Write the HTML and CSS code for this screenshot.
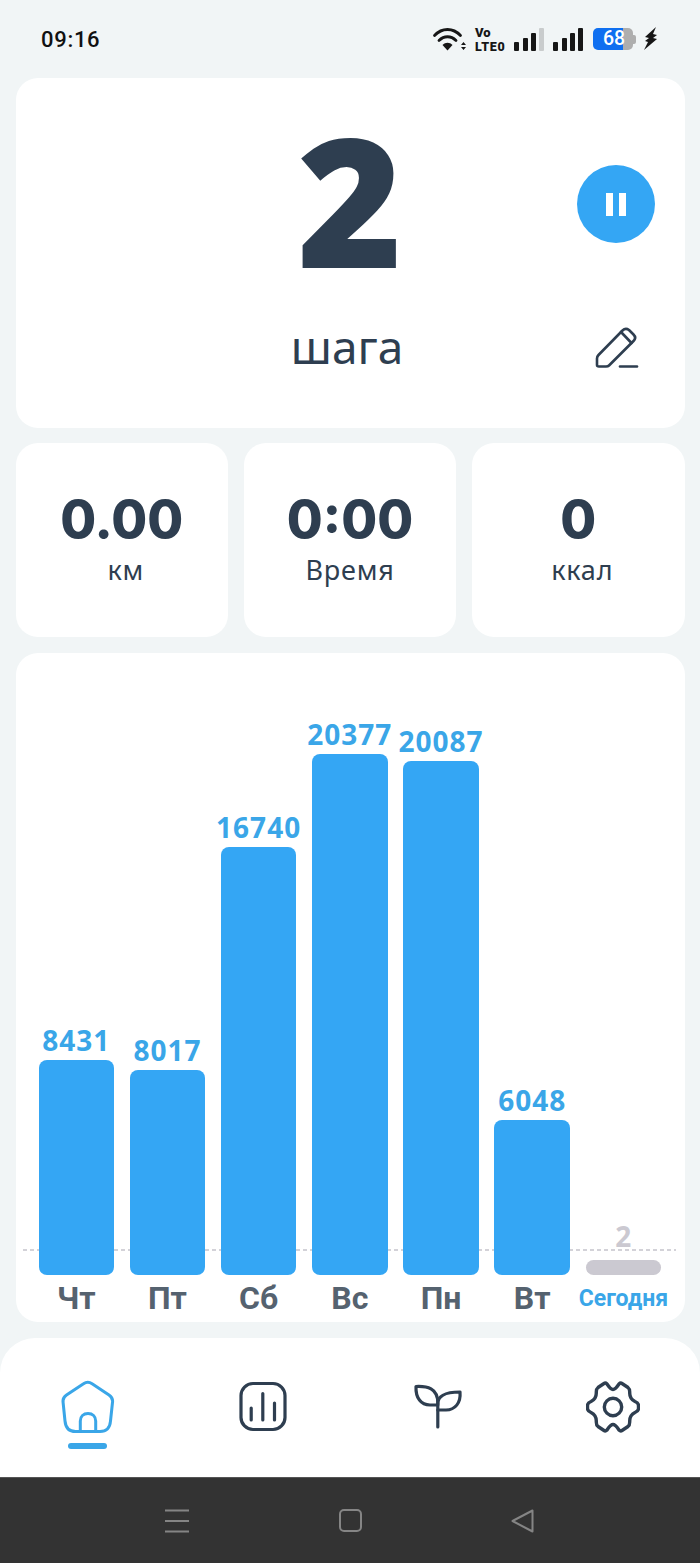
FILE: index.html
```html
<!DOCTYPE html>
<html lang="ru">
<head>
<meta charset="utf-8">
<title>Шаги</title>
<link rel="stylesheet" href="styles.css">
</head>
<body>
<div class="screen">
  <header class="status">
    <span class="clock">09:16</span>
    <div class="status-icons">
      <svg class="wifi" width="36" height="26" viewBox="0 0 36 26"><g fill="none" stroke="#161616" stroke-width="2.8" stroke-linecap="round"><path d="M2.500 9.500C10 1.500 21 1.500 28.500 9.500"/><path d="M7 14.500C12 9.500 19 9.500 24 14.500"/></g><path d="M10.500 19C13.500 16 17.500 16 20.500 19L15.500 24.500Z" fill="#161616"/><path d="M29 19h5l-2.500-3zM29 21h5l-2.500 3z" fill="#161616"/></svg>
      <div class="volte"><span class="vo">Vo</span><span class="lte">LTE0</span></div>
      <svg class="sig" width="30" height="24" viewBox="0 0 30 24"><rect x="0" y="15" width="5" height="9" rx="1" fill="#161616"/><rect x="9" y="11" width="5" height="13" rx="1" fill="#161616"/><rect x="17" y="6" width="5" height="18" rx="1" fill="#161616"/><rect x="25" y="1" width="5" height="23" rx="1" fill="#c9cccd"/></svg>
      <svg class="sig sig2" width="30" height="24" viewBox="0 0 30 24"><rect x="0" y="15" width="5" height="9" rx="1" fill="#161616"/><rect x="9" y="11" width="5" height="13" rx="1" fill="#161616"/><rect x="17" y="6" width="5" height="18" rx="1" fill="#161616"/><rect x="25" y="1" width="5" height="23" rx="1" fill="#161616"/></svg>
      <div class="battery"><div class="battery-fill"></div><div class="battery-rest"></div><span class="battery-cap"></span><span class="battery-num">68</span></div>
      <svg class="bolt" width="16" height="24" viewBox="0 0 16 24"><path d="M13 0L2 10l4 1-4 3 3 1-4 8 13-11-4-1 4-3-4-1z" fill="#161616"/></svg>
    </div>
  </header>

  <section class="card hero">
    <div class="hero-number">2</div>
    <div class="hero-label">шага</div>
    <button class="pause"><span></span><span></span></button>
    <svg class="edit" width="46" height="46" viewBox="0 0 46 46" fill="none" stroke="#2e3e50" stroke-width="2.6" stroke-linecap="round" stroke-linejoin="round">
      <path d="M3 42V35.500C3 34 3.500 33 4.500 32L28.500 7.500C30.500 5.500 33 5.500 35 7L39.500 11.500C41.500 13.500 41.500 16 39.500 18L15 42.500C14 43.500 13 43.500 12 43.500H5C3.800 43.500 3 43 3 42Z"/>
      <path d="M27 9L37.500 20"/>
      <path d="M26 43.500H43"/>
    </svg>
  </section>

  <section class="stats">
    <div class="card stat"><div class="stat-value">0.00</div><div class="stat-label nudged">км</div></div>
    <div class="card stat"><div class="stat-value">0:00</div><div class="stat-label">Время</div></div>
    <div class="card stat"><div class="stat-value">0</div><div class="stat-label nudged">ккал</div></div>
  </section>

  <section class="card chart">
    <div class="baseline"></div>
    <div class="bars">
      <div class="col"><span class="val">8431</span><div class="bar" style="height:215px"></div><span class="day">Чт</span></div>
      <div class="col"><span class="val">8017</span><div class="bar" style="height:205px"></div><span class="day">Пт</span></div>
      <div class="col"><span class="val">16740</span><div class="bar" style="height:428px"></div><span class="day">Сб</span></div>
      <div class="col"><span class="val">20377</span><div class="bar" style="height:521px"></div><span class="day">Вс</span></div>
      <div class="col"><span class="val">20087</span><div class="bar" style="height:514px"></div><span class="day">Пн</span></div>
      <div class="col"><span class="val">6048</span><div class="bar" style="height:155px"></div><span class="day">Вт</span></div>
      <div class="col today"><span class="val">2</span><div class="bar" style="height:15px"></div><span class="day">Сегодня</span></div>
    </div>
  </section>

  <nav class="tabs">
    <div class="tab active">
      <svg width="54" height="54" viewBox="0 0 54 54" fill="none" stroke="#3aa6e8" stroke-width="3" stroke-linecap="round" stroke-linejoin="round">
        <path d="M22.500 3.800C25 1.900 28.600 1.900 31.100 3.800L48 15C50.500 16.700 51.800 18.500 51.600 21.500L49.500 41C49 47.500 45.500 51.500 39 51.500H14.500C8 51.500 4.600 47.500 4 41L2 21.500C1.800 18.500 3 16.700 5.500 15Z"/>
        <path d="M19.300 51V41C19.300 36.500 22.500 33.500 27 33.500C31.500 33.500 34.700 36.500 34.700 41V51"/>
      </svg>
      <span class="tab-bar"></span>
    </div>
    <div class="tab">
      <svg width="54" height="54" viewBox="0 0 54 54" fill="none" stroke="#2e3e50" stroke-width="3.200" stroke-linecap="round">
        <rect x="5" y="3.500" width="44" height="46" rx="12"/>
        <path d="M15.200 28V40M26.800 13.500V40M38.500 23V40"/>
      </svg>
    </div>
    <div class="tab">
      <svg width="54" height="54" viewBox="0 0 54 54" fill="none" stroke="#2e3e50" stroke-width="3.200" stroke-linecap="round" stroke-linejoin="round">
        <path d="M5 6.500C16 6 26.800 8 26.800 23V25H19C10 25 4.500 18 5 6.500Z"/>
        <path d="M26.800 24C26.800 16 33 12 49 12C50 23 44 30 35 30H26.800"/>
        <path d="M26.800 25V47"/>
      </svg>
    </div>
    <div class="tab">
      <svg width="54" height="54" viewBox="0 0 54 54" fill="none" stroke="#2e3e50" stroke-width="3.400" stroke-linecap="round" stroke-linejoin="round">
        <path d="M27 9.500C29.500 9.500 31 7 33 4C34 3 35 2.800 36 3.500L42 7.500C44 9 43.700 11 43.700 13C43.700 17.500 46 20 49 21.500C51.500 22.500 52.500 24 52.500 25.500V28.500C52.500 30 51.500 31.500 49 32.500C46 34 43.700 36.500 43.700 41C43.700 43 44 45 42 46.500L36 50.500C35 51.200 34 51 33 50C31 47 29.500 44.500 27 44.500C24.500 44.500 23 47 21 50C20 51 19 51.200 18 50.500L12 46.500C10 45 10.300 43 10.300 41C10.300 36.500 8 34 5 32.500C2.500 31.500 1.500 30 1.500 28.500V25.500C1.500 24 2.500 22.500 5 21.500C8 20 10.300 17.500 10.300 13C10.300 11 10 9 12 7.500L18 3.500C19 2.800 20 3 21 4C23 7 24.500 9.500 27 9.500Z"/>
        <circle cx="27" cy="27" r="8.700"/>
      </svg>
    </div>
  </nav>

  <footer class="sysbar">
    <svg width="24" height="24" viewBox="0 0 24 24" fill="none" stroke="#858585" stroke-width="2"><path d="M0 1.500H24M0 12H24M0 22.500H24"/></svg>
    <svg width="23" height="23" viewBox="0 0 23 23" fill="none" stroke="#858585" stroke-width="2"><rect x="1" y="1" width="21" height="21" rx="4"/></svg>
    <svg width="23" height="24" viewBox="0 0 23 24" fill="none" stroke="#858585" stroke-width="2" stroke-linejoin="round"><path d="M21.500 1.500V22.500L1.500 12Z"/></svg>
  </footer>
</div>
</body>
</html>
```

FILE: styles.css
```css
* { box-sizing: border-box; }
html, body { margin: 0; padding: 0; }
body { background: #f1f5f6; font-family: "Roboto", "Liberation Sans", sans-serif; }
.screen { width: 700px; height: 1563px; display: flex; flex-direction: column; overflow: hidden; }

.status { height: 78px; flex: none; display: flex; justify-content: space-between; align-items: center; padding: 0 41px; }
.clock { font-family: "Roboto", sans-serif; font-size: 22px; font-weight: 500; color: #111; letter-spacing: 0.7px; }
.status-icons { display: flex; align-items: center; }
.wifi { display: block; margin-right: 7px; }
.volte { display: flex; flex-direction: column; width: 30px; font-family: "Roboto", sans-serif; font-weight: 900; color: #161616; margin-right: 9px; }
.vo { font-size: 13px; line-height: 15px; }
.lte { font-size: 12.5px; line-height: 14px; letter-spacing: 0.7px; }
.sig { display: block; margin-right: 9px; }
.sig2 { margin-right: 10px; }
.battery { position: relative; width: 43px; height: 22px; display: flex; margin-right: 7px; }
.battery-fill { width: 30px; background: #0f6ff0; border-radius: 5px 0 0 5px; }
.battery-rest { width: 10px; background: #aeaeae; border-radius: 0 5px 5px 0; }
.battery-cap { width: 3px; height: 9px; align-self: center; background: #aeaeae; border-radius: 0 2px 2px 0; }
.battery-num { position: absolute; left: 10px; top: 0; font-family: "Roboto", sans-serif; font-size: 19.5px; line-height: 22px; font-weight: 500; color: #fff; }
.bolt { display: block; }

.card { background: #fff; border-radius: 22px; }
.hero { position: relative; height: 350px; margin: 0 15.5px; flex: none; display: flex; flex-direction: column; align-items: center; }
.hero-number { font-family: "Open Sans", sans-serif; font-weight: 800; font-size: 180px; line-height: 226px; color: #2e3e50; margin-top: 8px; }
.hero-label { font-family: "Noto Sans", sans-serif; font-size: 46px; line-height: 60px; color: #2e3e50; margin: 4px 6px 0 0; }
.pause { position: absolute; left: 561.500px; top: 87px; width: 78px; height: 78px; border: 0; padding: 0; border-radius: 50%; background: #34a6f4; display: flex; align-items: center; justify-content: center; gap: 6px; }
.pause span { width: 7px; height: 23px; background: #fff; }
.edit { position: absolute; left: 578.500px; top: 245px; }

.stats { display: grid; grid-template-columns: repeat(3, 1fr); gap: 15.75px; margin: 15px 15.5px 0; flex: none; }
.stat { height: 194px; display: flex; flex-direction: column; align-items: center; padding-top: 45px; color: #2e3e50; }
.stat-value { font-family: "Inter", sans-serif; font-size: 52px; font-weight: 800; line-height: 64px; }
.stat-label { font-family: "Noto Sans", sans-serif; font-size: 27px; line-height: 36px; letter-spacing: 0.8px; }
.nudged { padding-left: 8px; }

.chart { position: relative; height: 669px; margin: 16px 15.5px 0; flex: none; padding: 0 23px; }
.baseline { position: absolute; left: 7.500px; right: 9px; top: 596px; height: 2px; background: repeating-linear-gradient(90deg, #d3d2d8 0 4px, transparent 4px 7px); }
.bars { position: relative; height: 669px; display: grid; grid-template-columns: repeat(7, 75.5px); column-gap: 15.7px; align-items: end; }
.col { display: flex; flex-direction: column; align-items: center; }
.val { font-family: "Noto Sans", sans-serif; font-size: 28px; line-height: 28px; font-weight: 700; color: #3aa6e8; white-space: nowrap; margin-bottom: 6px; letter-spacing: 1px; }
.bar { width: 100%; background: #34a6f4; border-radius: 8px; flex: none; }
.day { font-family: "Roboto", sans-serif; height: 47px; line-height: 47px; font-size: 32px; font-weight: 700; color: #55626f; white-space: nowrap; }
.today .val { color: #cbc9d1; margin-bottom: 10px; letter-spacing: 0; }
.today .bar { background: #cbc9d1; }
.today .day { font-size: 23px; color: #3aa6e8; }

.tabs { height: 139px; margin-top: 16px; flex: none; background: #fff; border-radius: 35px 35px 0 0; display: grid; grid-template-columns: repeat(4, 1fr); }
.tab { display: flex; flex-direction: column; align-items: center; padding-top: 42px; }
.tab svg { display: block; }
.tab-bar { width: 39px; height: 6px; border-radius: 3px; background: #3aa6e8; margin-top: 9px; }

.sysbar { flex: 1; background: #333; border-top: 1px solid #555; display: flex; align-items: center; justify-content: space-between; padding: 0 166px 0 165px; }
```
